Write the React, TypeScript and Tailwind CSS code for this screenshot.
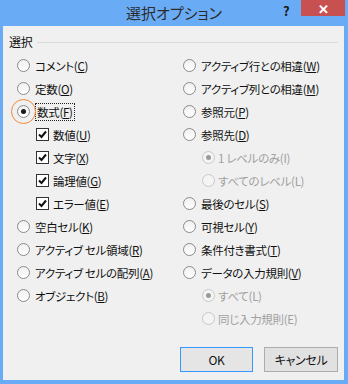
import React from "react";

type Item = {
  kind: "radio" | "check";
  label: string;
  key: string;
  checked?: boolean;
  disabled?: boolean;
  sub?: boolean;
  focus?: boolean;
};

const leftItems: Item[] = [
  { kind: "radio", label: "コメント", key: "C" },
  { kind: "radio", label: "定数", key: "O" },
  { kind: "radio", label: "数式", key: "F", checked: true, focus: true },
  { kind: "check", label: "数値", key: "U", checked: true, sub: true },
  { kind: "check", label: "文字", key: "X", checked: true, sub: true },
  { kind: "check", label: "論理値", key: "G", checked: true, sub: true },
  { kind: "check", label: "エラー値", key: "E", checked: true, sub: true },
  { kind: "radio", label: "空白セル", key: "K" },
  { kind: "radio", label: "アクティブ セル領域", key: "R" },
  { kind: "radio", label: "アクティブ セルの配列", key: "A" },
  { kind: "radio", label: "オブジェクト", key: "B" },
];

const rightItems: Item[] = [
  { kind: "radio", label: "アクティブ行との相違", key: "W" },
  { kind: "radio", label: "アクティブ列との相違", key: "M" },
  { kind: "radio", label: "参照元", key: "P" },
  { kind: "radio", label: "参照先", key: "D" },
  { kind: "radio", label: "1 レベルのみ", key: "I", checked: true, disabled: true, sub: true },
  { kind: "radio", label: "すべてのレベル", key: "L", disabled: true, sub: true },
  { kind: "radio", label: "最後のセル", key: "S" },
  { kind: "radio", label: "可視セル", key: "Y" },
  { kind: "radio", label: "条件付き書式", key: "T" },
  { kind: "radio", label: "データの入力規則", key: "V" },
  { kind: "radio", label: "すべて", key: "L", checked: true, disabled: true, sub: true },
  { kind: "radio", label: "同じ入力規則", key: "E", disabled: true, sub: true },
];

const Radio = ({ checked, disabled }: { checked?: boolean; disabled?: boolean }) => (
  <span
    className={`flex h-[13px] w-[13px] shrink-0 items-center justify-center rounded-full border ${
      disabled
        ? "border-[#c8c8c8] bg-[#f4f4f4]"
        : "border-[#8a8a8a] bg-gradient-to-b from-[#f0f0f0] to-white"
    }`}
  >
    {checked && (
      <span
        className={`h-[5px] w-[5px] rounded-full ${disabled ? "bg-[#9a9a9a]" : "bg-[#1a1a1a]"}`}
      />
    )}
  </span>
);

const Check = ({ checked }: { checked?: boolean }) => (
  <span className="flex h-[13px] w-[13px] shrink-0 items-center justify-center border border-[#333] bg-white">
    {checked && (
      <svg width="9" height="9" viewBox="0 0 9 9">
        <path d="M1 4.5 L3.5 7 L8 1.5" fill="none" stroke="#111" strokeWidth="2" />
      </svg>
    )}
  </span>
);

const Row = ({ item }: { item: Item }) => (
  <div className={`flex h-[23px] items-center ${item.sub ? "pl-[19px]" : ""}`}>
    <span className="relative flex">
      {item.kind === "radio" ? (
        <Radio checked={item.checked} disabled={item.disabled} />
      ) : (
        <Check checked={item.checked} />
      )}
      {item.focus && (
        <span className="absolute left-[-6px] top-[-6px] h-[25px] w-[25px] rounded-full border border-[#f08a3c]" />
      )}
    </span>
    <span
      className={`whitespace-nowrap leading-[16px] ${
        item.kind === "check" ? "ml-[4px]" : item.sub ? "ml-[3px]" : "ml-[5px]"
      } ${item.focus ? "border border-dotted border-[#222] px-[1px]" : ""} ${
        item.disabled ? "text-[#a0a0a0]" : "text-[#111]"
      }`}
    >
      {item.label}(
      {item.disabled ? item.key : <u className="underline-offset-[1px]">{item.key}</u>})
    </span>
  </div>
);

export default function App() {
  return (
    <div
      className="flex h-[384px] w-[348px] flex-col bg-[#6aabf5] text-[11.5px] tracking-[-0.3px]"
      style={{ fontFamily: '"Noto Sans CJK JP", "Noto Sans", sans-serif', fontFeatureSettings: '"palt"' }}
    >
      <div className="relative flex h-[26px] shrink-0 items-center justify-center">
        <span className="text-[15px] tracking-normal text-[#2b2b2b]">選択オプション</span>
        <span className="absolute left-[283px] top-[1px] text-[13px] font-bold text-[#1a1a1a]">?</span>
        <span className="absolute right-[3px] top-0 flex h-[16px] w-[44px] items-center justify-center bg-[#c75050] text-[13px] font-bold leading-none text-white">
          ✕
        </span>
      </div>
      <div className="mx-[3px] mb-[4px] mr-[4px] flex flex-1 flex-col bg-[#f0f0f0]">
        <div className="mt-[8px] flex h-[16px] items-center pl-[6px] pr-[6px]">
          <span className="text-[12px] text-[#111]">選択</span>
          <span className="ml-[5px] h-px flex-1 bg-[#dcdcdc]" />
        </div>
        <div className="mt-[4px] grid grid-cols-[166px_1fr] pl-[14px]">
          <div className="flex flex-col">
            {leftItems.map((it, i) => (
              <Row key={i} item={it} />
            ))}
          </div>
          <div className="flex flex-col">
            {rightItems.map((it, i) => (
              <Row key={i} item={it} />
            ))}
          </div>
        </div>
        <div className="mt-auto flex justify-end gap-[11px] pb-[8px] pr-[6px]">
          <button className="h-[25px] w-[73px] border border-[#3399ff] bg-[#e5e5e5] text-[12px] text-[#111]">
            OK
          </button>
          <button className="h-[25px] w-[74px] border border-[#adadad] bg-[#e1e1e1] text-[12px] text-[#111]">
            キャンセル
          </button>
        </div>
      </div>
    </div>
  );
}
